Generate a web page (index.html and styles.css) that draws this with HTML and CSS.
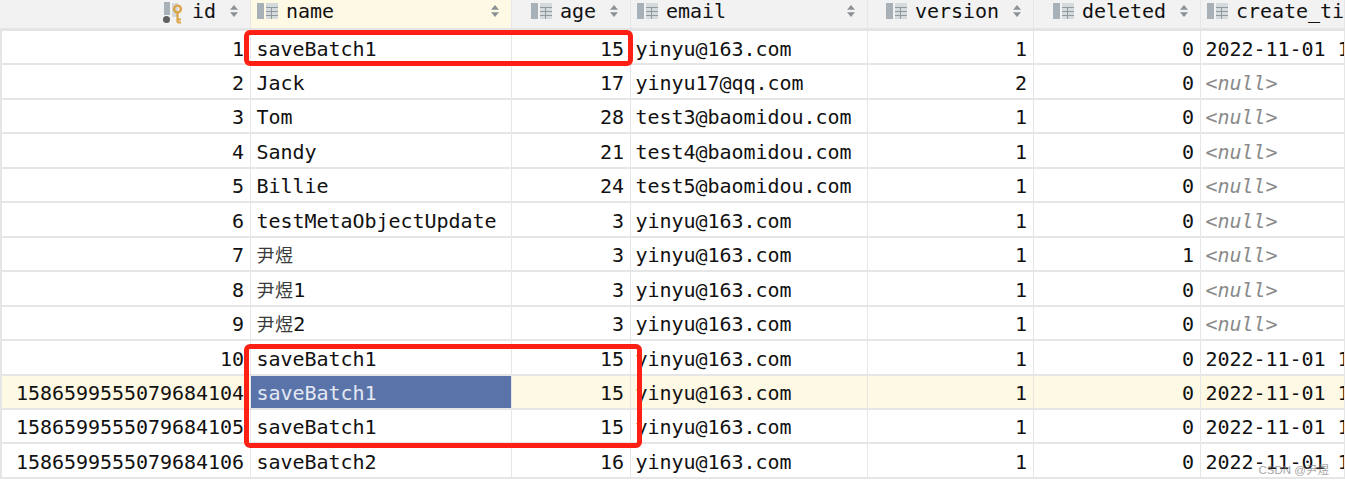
FILE: index.html
```html
<!DOCTYPE html>
<html lang="en">
<head>
<meta charset="utf-8">
<title>user table</title>
<link rel="stylesheet" href="styles.css">
</head>
<body>
<svg class="defs" width="0" height="0" aria-hidden="true">
  <symbol id="col" viewBox="0 0 21 16">
    <rect x="0" y="0" width="7" height="16" fill="#a8b1b7"/>
    <rect x="9" y="0" width="12" height="16" fill="#d5dadd"/>
    <path d="M9 4.5h12M9 8.5h12M9 12.5h12M14.5 4.5v11.5" stroke="#8f999f" stroke-width="1" fill="none"/>
  </symbol>
  <symbol id="sort" viewBox="0 0 8 12">
    <path d="M4 0 8 4.8H0Z M4 12 0 7.2H8Z" fill="#8b9196"/>
  </symbol>
</svg>
<div class="grid">
  <div class="row head">
    <div class="th th-id">
      <svg class="pk" viewBox="0 0 20 22" width="22" height="22"><rect x="1" y="0" width="6" height="13" fill="#a8b1b7"/><rect x="9" y="1" width="6" height="14" fill="#d3d8db"/><circle cx="3.5" cy="17.5" r="3.5" fill="#5d5f60"/><circle cx="14.5" cy="7" r="3.4" fill="none" stroke="#dca345" stroke-width="2.4"/><path d="M14.5 10v10.5M14.5 17.5h3.5M14.5 20.5h3.5" stroke="#dca345" stroke-width="2.2" fill="none"/></svg>
      <span class="label">id</span><svg class="sort sort-near"><use href="#sort"/></svg>
    </div>
    <div class="th active"><svg class="ic"><use href="#col"/></svg><span class="label">name</span><svg class="sort sort-far"><use href="#sort"/></svg></div>
    <div class="th th-end"><svg class="ic"><use href="#col"/></svg><span class="label">age</span><svg class="sort sort-near"><use href="#sort"/></svg></div>
    <div class="th"><svg class="ic"><use href="#col"/></svg><span class="label">email</span><svg class="sort sort-far"><use href="#sort"/></svg></div>
    <div class="th th-end"><svg class="ic"><use href="#col"/></svg><span class="label">version</span><svg class="sort sort-near"><use href="#sort"/></svg></div>
    <div class="th th-end"><svg class="ic"><use href="#col"/></svg><span class="label">deleted</span><svg class="sort sort-near"><use href="#sort"/></svg></div>
    <div class="th"><svg class="ic"><use href="#col"/></svg><span class="label">create_time</span></div>
  </div>
  <div class="row"><div class="td num">1</div><div class="td">saveBatch1</div><div class="td num">15</div><div class="td">yinyu@163.com</div><div class="td num">1</div><div class="td num">0</div><div class="td">2022-11-01 11:22:33</div></div>
  <div class="row"><div class="td num">2</div><div class="td">Jack</div><div class="td num">17</div><div class="td">yinyu17@qq.com</div><div class="td num">2</div><div class="td num">0</div><div class="td null">&lt;null&gt;</div></div>
  <div class="row"><div class="td num">3</div><div class="td">Tom</div><div class="td num">28</div><div class="td">test3@baomidou.com</div><div class="td num">1</div><div class="td num">0</div><div class="td null">&lt;null&gt;</div></div>
  <div class="row"><div class="td num">4</div><div class="td">Sandy</div><div class="td num">21</div><div class="td">test4@baomidou.com</div><div class="td num">1</div><div class="td num">0</div><div class="td null">&lt;null&gt;</div></div>
  <div class="row"><div class="td num">5</div><div class="td">Billie</div><div class="td num">24</div><div class="td">test5@baomidou.com</div><div class="td num">1</div><div class="td num">0</div><div class="td null">&lt;null&gt;</div></div>
  <div class="row"><div class="td num">6</div><div class="td">testMetaObjectUpdate</div><div class="td num">3</div><div class="td">yinyu@163.com</div><div class="td num">1</div><div class="td num">0</div><div class="td null">&lt;null&gt;</div></div>
  <div class="row"><div class="td num">7</div><div class="td"><span class="cjk">尹煜</span></div><div class="td num">3</div><div class="td">yinyu@163.com</div><div class="td num">1</div><div class="td num">1</div><div class="td null">&lt;null&gt;</div></div>
  <div class="row"><div class="td num">8</div><div class="td"><span class="cjk">尹煜</span>1</div><div class="td num">3</div><div class="td">yinyu@163.com</div><div class="td num">1</div><div class="td num">0</div><div class="td null">&lt;null&gt;</div></div>
  <div class="row"><div class="td num">9</div><div class="td"><span class="cjk">尹煜</span>2</div><div class="td num">3</div><div class="td">yinyu@163.com</div><div class="td num">1</div><div class="td num">0</div><div class="td null">&lt;null&gt;</div></div>
  <div class="row"><div class="td num">10</div><div class="td">saveBatch1</div><div class="td num">15</div><div class="td">yinyu@163.com</div><div class="td num">1</div><div class="td num">0</div><div class="td">2022-11-01 11:22:33</div></div>
  <div class="row current"><div class="td num">1586599555079684104</div><div class="td selected">saveBatch1</div><div class="td num">15</div><div class="td">yinyu@163.com</div><div class="td num">1</div><div class="td num">0</div><div class="td">2022-11-01 11:22:33</div></div>
  <div class="row"><div class="td num">1586599555079684105</div><div class="td">saveBatch1</div><div class="td num">15</div><div class="td">yinyu@163.com</div><div class="td num">1</div><div class="td num">0</div><div class="td">2022-11-01 11:22:33</div></div>
  <div class="row"><div class="td num">1586599555079684106</div><div class="td">saveBatch2</div><div class="td num">16</div><div class="td">yinyu@163.com</div><div class="td num">1</div><div class="td num">0</div><div class="td">2022-11-01 11:22:33</div></div>
</div>
<div class="mark mark-one"></div>
<div class="mark mark-two"></div>
<div class="watermark">CSDN @尹煜</div>
</body>
</html>
```
FILE: styles.css
```css
html, body {
  margin: 0;
  padding: 0;
  height: 483px;
  overflow: hidden;
  background: #fff;
}
body {
  position: relative;
  font-family: "DejaVu Sans Mono", "Noto Sans CJK SC", monospace;
  font-size: 20px;
  letter-spacing: -0.04px;
  color: #111;
}
.defs { position: absolute; }
.grid {
  display: flex;
  flex-direction: column;
  width: 1345px;
  overflow: hidden;
}
.row {
  display: grid;
  grid-template-columns: 249px 261px 119px 237px 166px 167px 1fr;
  height: 34.46px;
  box-sizing: border-box;
  border-bottom: 2px solid #e6e6e6;
  border-left: 2px solid #e6e6e6;
}
.head {
  height: 31px;
  grid-template-columns: 251px 261px 119px 237px 166px 167px 1fr;
  background: #f2f2f2;
  border-bottom: 3px solid #e4e4e4;
  border-left: 0;
}
.th {
  display: flex;
  align-items: center;
  box-sizing: border-box;
  padding: 0 12px 7px 6px;
  border-right: 1px solid #e6e6e6;
  white-space: nowrap;
  overflow: hidden;
}
.th-id, .th-end { justify-content: flex-end; }
.active { background: #fef9e4; }
.ic { width: 21px; height: 16px; margin-right: 8px; flex: none; }
.pk { margin-right: 8px; margin-top: 5px; flex: none; }
.label { line-height: 1; }
.sort { width: 8px; height: 12px; flex: none; }
.sort-near { margin-left: 14px; }
.sort-far { margin-left: auto; }
.td {
  box-sizing: border-box;
  padding: 0.5px 6px 0 4.5px;
  line-height: 34px;
  border-right: 1px solid #e6e6e6;
  white-space: nowrap;
  overflow: hidden;
}
.td:nth-child(2) { padding-left: 5.5px; }
.num { text-align: right; }
.null { color: #8a8a8a; font-style: italic; }
.cjk { font-size: 18px; color: #3a3a3a; letter-spacing: 0.4px; }
.current { background: #fef9e5; }
.selected { background: #5a74aa; color: #e4e8f2; }
.mark {
  position: absolute;
  box-sizing: border-box;
  border: 5px solid #fe2014;
  border-radius: 6px;
}
.mark-one { left: 244px; top: 30px; width: 389px; height: 36px; }
.mark-two { left: 244px; top: 344px; width: 398px; height: 104px; }
.watermark {
  position: absolute;
  right: 16px;
  top: 461px;
  font-family: "Liberation Sans", "Noto Sans CJK SC", sans-serif;
  font-size: 11.5px;
  letter-spacing: 0;
  color: rgba(120, 120, 120, 0.7);
}
```
